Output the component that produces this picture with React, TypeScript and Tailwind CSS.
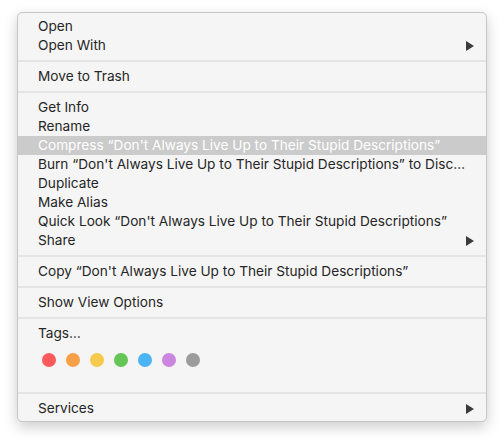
import { ReactNode } from 'react';

const title = "“Don't Always Live Up to Their Stupid Descriptions”";

function Arrow() {
  return (
    <svg width="8" height="10" viewBox="0 0 8 10" className="shrink-0">
      <path d="M0 0 L8 5 L0 10 Z" fill="#3b3b3b" />
    </svg>
  );
}

function Row({ children, submenu, active }: { children: ReactNode; submenu?: boolean; active?: boolean }) {
  return (
    <div
      className={`flex h-[19px] items-center justify-between pl-[20px] pr-[12px] whitespace-nowrap ${
        active ? 'bg-[#cbcbcb] text-white' : 'text-[#262626]'
      }`}
    >
      <span className="-mt-[1px]">{children}</span>
      {submenu && <Arrow />}
    </div>
  );
}

function Separator() {
  return (
    <div className="py-[5px]">
      <div className="h-[2px] bg-[#e4e4e4]" />
    </div>
  );
}

const tagColors = ['#fd5b5b', '#f8a048', '#f6c94f', '#63c655', '#4ab4f4', '#cb86df', '#9c9c9c'];

export default function App() {
  return (
    <div className="h-[443px] w-[504px] bg-white pl-[17px] pt-[12px]">
      <div
        className="w-[470px] overflow-hidden rounded-[5px] border border-[#c6c6c6] bg-[#f5f5f5] pt-[4px] pb-[3px] text-[13.65px] leading-[19px] shadow-[0_5px_14px_rgba(0,0,0,0.2)]"
        style={{ fontFamily: 'Inter, "Noto Sans", sans-serif' }}
      >
        <Row>Open</Row>
        <Row submenu>Open With</Row>
        <Separator />
        <Row>Move to Trash</Row>
        <Separator />
        <Row>Get Info</Row>
        <Row>Rename</Row>
        <Row active>Compress {title}</Row>
        <Row>Burn “Don't Always Live Up to Their Stupid Descriptions” to Disc…</Row>
        <Row>Duplicate</Row>
        <Row>Make Alias</Row>
        <Row>Quick Look {title}</Row>
        <Row submenu>Share</Row>
        <Separator />
        <Row>Copy {title}</Row>
        <Separator />
        <Row>Show View Options</Row>
        <Separator />
        <Row>Tags…</Row>
        <div className="flex gap-[10px] pl-[24px] pt-[10px] pb-[20px]">
          {tagColors.map((c) => (
            <div key={c} className="h-[14px] w-[14px] rounded-full" style={{ backgroundColor: c }} />
          ))}
        </div>
        <Separator />
        <Row submenu>Services</Row>
      </div>
    </div>
  );
}
